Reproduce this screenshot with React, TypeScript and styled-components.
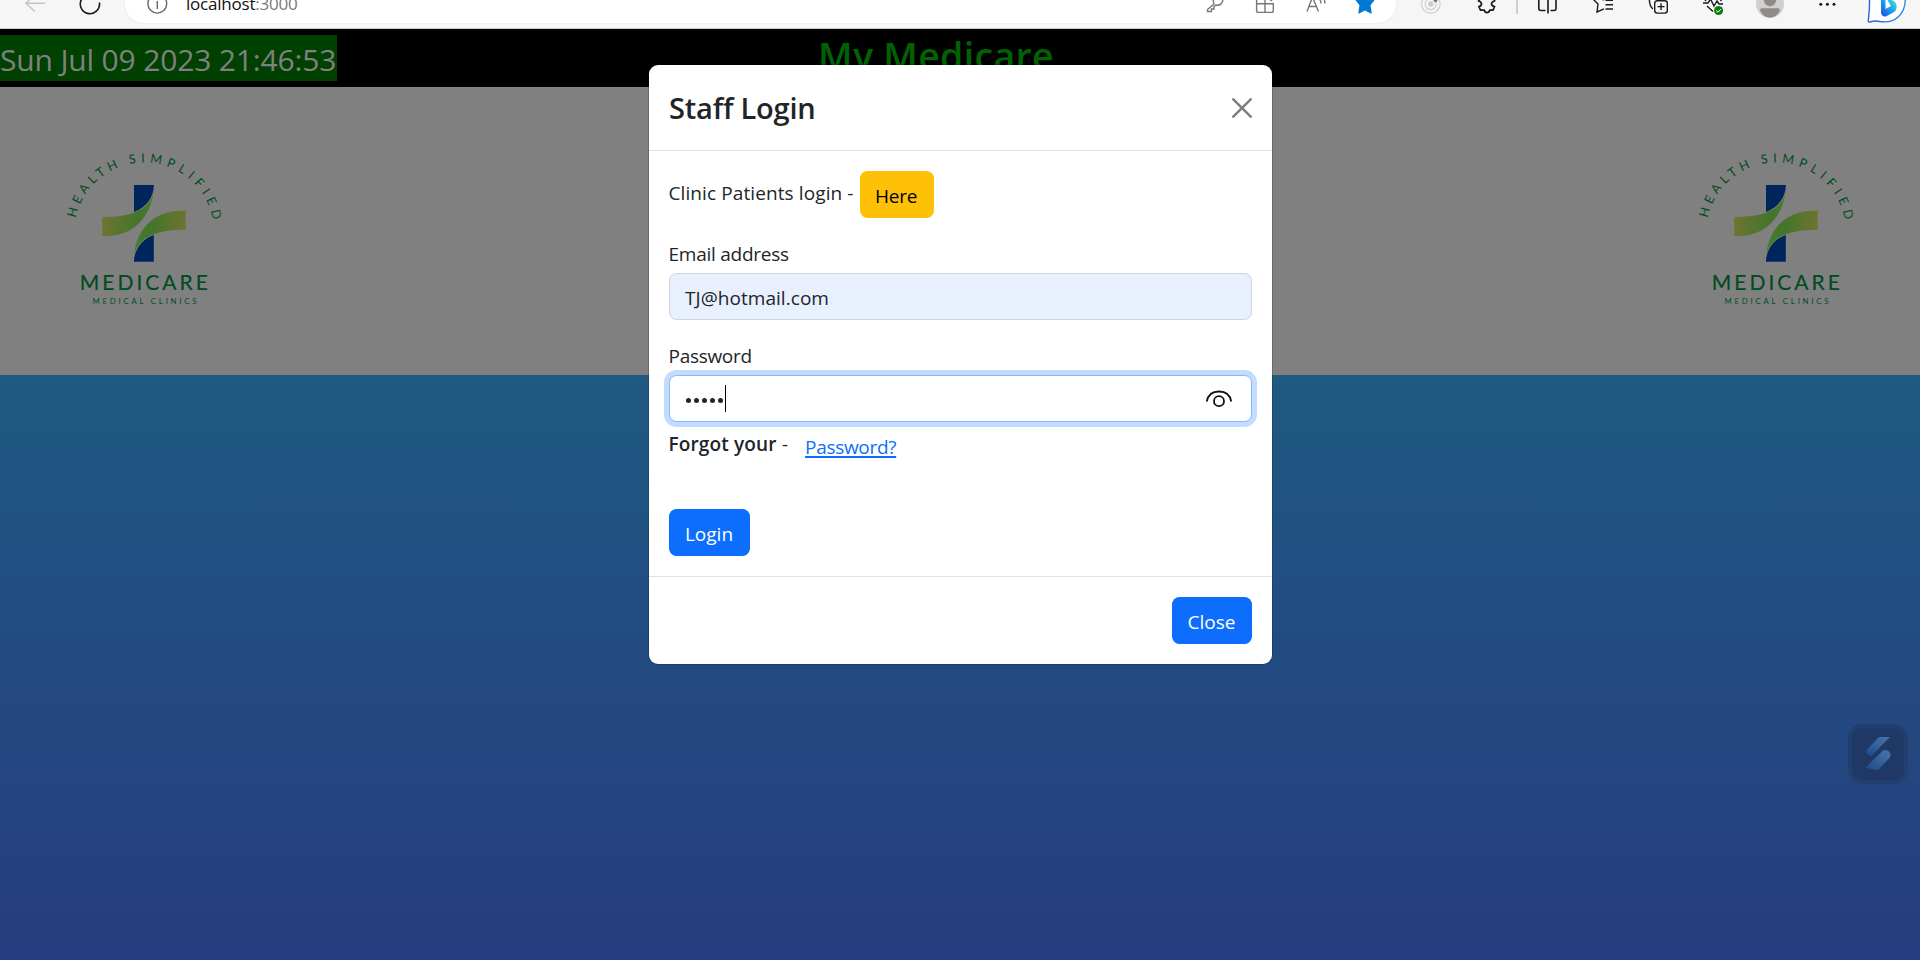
import React from "react";
import styled, { createGlobalStyle } from "styled-components";

const Global = createGlobalStyle`
  *, *::before, *::after { box-sizing: border-box; }
  html, body { margin: 0; padding: 0; }
  body { font-family: "Open Sans", "Noto Sans", sans-serif; color: #212529; overflow: hidden; }
`;

const Page = styled.div`
  position: relative;
  width: 1920px;
  height: 960px;
  display: flex;
  flex-direction: column;
  overflow: hidden;
`;

/* ---------- browser toolbar ---------- */
const Toolbar = styled.div`
  height: 29px;
  flex: none;
  display: flex;
  align-items: flex-start;
  background: #f6f6f6;
  border-bottom: 1px solid #c9cdc9;
  overflow: hidden;
`;
const Icon = styled.svg<{ $ml?: number; $w?: number; $tone?: string; $fill?: string; $sw?: number }>`
  display: block;
  flex: none;
  width: ${(p) => p.$w ?? 30}px;
  height: 28px;
  margin-left: ${(p) => p.$ml ?? 0}px;
  fill: ${(p) => p.$fill ?? "none"};
  stroke: ${(p) => p.$tone ?? "#1b1b1b"};
  stroke-width: ${(p) => p.$sw ?? 1.4};
`;
const AddressBar = styled.div`
  width: 1271px;
  height: 23px;
  flex: none;
  margin-left: 20px;
  padding-right: 16px;
  display: flex;
  background: #fff;
  border-radius: 0 0 19px 19px;
  box-shadow: 0 0 2px rgba(0, 0, 0, 0.1);
`;
const Url = styled.span`
  flex: 1;
  margin-left: 14px;
  font-size: 17px;
  line-height: 24px;
  height: 24px;
  margin-top: -8px;
  letter-spacing: -0.22px;
  color: #111;
  span { color: #777; }
`;
const Divider = styled.span`
  width: 2px;
  height: 14px;
  margin: 0 14px 0 15px;
  background: #cfcfcf;
`;

/* ---------- page ---------- */
const TopBar = styled.header`
  height: 58px;
  flex: none;
  display: grid;
  grid-template-columns: 1fr auto 1fr;
  background: #000;
`;
const Clock = styled.div`
  justify-self: start;
  width: 337px;
  height: 46px;
  margin-top: 6px;
  background: #004000;
  color: #808080;
  font-size: 30px;
  line-height: 49px;
  letter-spacing: -0.16px;
  white-space: nowrap;
`;
const SiteTitle = styled.h1`
  margin: 2px 48px 0 0;
  font-size: 37.5px;
  font-weight: 600;
  line-height: 49px;
  letter-spacing: 0.3px;
  color: #006200;
  white-space: nowrap;
`;
const Banner = styled.section`
  height: 288px;
  flex: none;
  display: flex;
  justify-content: space-between;
  padding: 43px 38px 0 40px;
  background: #808080;
`;
const LogoSvg = styled.svg`
  width: 210px;
  height: 190px;
  fill: #004c22;
  font-family: Lato, sans-serif;
`;
const Main = styled.main`
  flex: 1;
  display: flex;
  justify-content: flex-end;
  align-items: flex-start;
  padding: 349px 12px 0 0;
  background: linear-gradient(#1f5a80, #205382 22%, #273c7e);
`;
const Widget = styled.div`
  width: 60px;
  height: 60px;
  padding: 4px;
  border-radius: 14px;
  background: #21406f;
  svg { display: block; border-radius: 10px; background: #1f3866; }
`;

/* ---------- dialog ---------- */
const Dialog = styled.div`
  position: absolute;
  left: 649px;
  top: 65px;
  width: 623px;
  height: 599px;
  background: #fff;
  border-radius: 9px;
  box-shadow: 0 0 0 1px rgba(0, 0, 0, 0.18);
  font-size: 19px;
  white-space: nowrap;
`;
const DialogHeader = styled.div`
  height: 86px;
  padding: 0 20px 0 20px;
  display: flex;
  justify-content: space-between;
  align-items: center;
  border-bottom: 1px solid #dee2e6;
`;
const DialogTitle = styled.h2`
  margin: 0;
  font-size: 29px;
  font-weight: 600;
  line-height: 40px;
  letter-spacing: -0.2px;
`;
const DialogBody = styled.div`
  height: 425px;
  padding: 20px;
`;
const DialogFooter = styled.div`
  height: 88px;
  padding: 20px;
  display: flex;
  justify-content: flex-end;
  border-top: 1px solid #dee2e6;
`;
const Row = styled.div<{ $h: number; $gap?: number }>`
  display: flex;
  align-items: flex-start;
  height: ${(p) => p.$h}px;
  margin-left: -0.5px;
  gap: ${(p) => p.$gap ?? 0}px;
`;
const Button = styled.button<{ $warn?: boolean; $w: number; $ls?: number }>`
  width: ${(p) => p.$w}px;
  height: 47px;
  padding: 3px 1px 0 0;
  border: 0;
  border-radius: 7.5px;
  background: ${(p) => (p.$warn ? "#ffc107" : "#0d6efd")};
  color: ${(p) => (p.$warn ? "#000" : "#fff")};
  font: 400 19px/40px "Open Sans", sans-serif;
  letter-spacing: ${(p) => p.$ls ?? 0}px;
`;
const Text = styled.span<{ $ls?: number; $lh?: number; $bold?: boolean }>`
  line-height: ${(p) => p.$lh ?? 30}px;
  letter-spacing: ${(p) => p.$ls ?? 0}px;
  font-weight: ${(p) => (p.$bold ? 600 : 400)};
`;
const Field = styled.div<{ $focus?: boolean; $ls?: number }>`
  height: 47px;
  display: flex;
  align-items: center;
  padding: 2px 16px 0 15px;
  border: 1px solid ${(p) => (p.$focus ? "#86b7fe" : "#ced4da")};
  border-radius: 7.5px;
  background: ${(p) => (p.$focus ? "#fff" : "#e8f0fe")};
  box-shadow: ${(p) => (p.$focus ? "0 0 0 5px #c2dbfe" : "none")};
  letter-spacing: ${(p) => p.$ls ?? 0}px;
`;
const Dots = styled.span`
  display: flex;
  gap: 3px;
  padding: 2px 0 0 1px;
  i { width: 5px; height: 5px; border-radius: 50%; background: #212529; }
`;
const Caret = styled.span`
  width: 1px;
  height: 27px;
  margin: 0 auto 3px 2px;
  background: #000;
`;
const Link = styled.a`
  margin-top: 10px;
  color: #0d6efd;
  line-height: 30px;
  letter-spacing: -0.3px;
  text-decoration: underline;
  text-decoration-thickness: 1.5px;
  text-underline-offset: 2px;
`;

const Logo = ({ id }: { id: string }) => (
  <LogoSvg viewBox="0 0 210 190">
    <defs>
      <linearGradient id={id + "a"}><stop offset="0" stopColor="#6c7531" /><stop offset=".75" stopColor="#41752b" /><stop offset="1" stopColor="#45802b" /></linearGradient>
      <linearGradient id={id + "b"}><stop offset="0" stopColor="#45802b" /><stop offset=".3" stopColor="#41752b" /><stop offset="1" stopColor="#6c7531" /></linearGradient>
      <path id={id + "arc"} d="M35.6 88A70 70 0 0 1 173.9 97.7" />
    </defs>
    <text fontSize="12.6"><textPath href={"#" + id + "arc"} textLength="69">HEALTH</textPath></text>
    <text fontSize="12.6"><textPath href={"#" + id + "arc"} startOffset="80.5" textLength="112">SIMPLIFIED</textPath></text>
    <path fill="#00245c" d="M94 55h19.8v2C113 67 107 77 94 82zM113.8 131.7H94V129C96 118 102 109 113.8 105z" />
    <path fill={`url(#${id}a)`} d="M62.3 87C88 87 111 82 113.5 60C112 84 95 108 62.3 106z" />
    <path fill={`url(#${id}b)`} d="M145.7 99.8C118 100 97 106 94.2 127C95 101 113 79 145.7 80.8z" />
    <text x="39.8" y="160" fontSize="21" stroke="#004c22" strokeWidth=".2" textLength="128">MEDICARE</text>
    <text x="52.5" y="173.7" fontSize="7.8" textLength="104">MEDICAL CLINICS</text>
  </LogoSvg>
);

export default function App() {
  return (
    <Page>
      <Global />
      <Toolbar>
        <Icon $ml={20} viewBox="20 0 30 28" $tone="#c4c4c4"><path d="M45 3.2H26.5M35 -6L26 3.2L35 11.8" /></Icon>
        <Icon $ml={25} viewBox="75 0 30 28" $sw={1.6}><path d="M99.4 2.5A9.6 9.6 0 1 1 82.5 -2" /></Icon>
        <AddressBar>
          <Icon $ml={17} viewBox="142 0 30 28" $tone="#666"><circle cx="157.3" cy="3.7" r="9.4" /><path d="M157.3 1v8" /></Icon>
          <Url>localhost<span>:3000</span></Url>
          <Icon viewBox="1200 0 30 28" $tone="#777"><path d="M1214 -3C1213 0 1213 2 1214 4L1207.5 9.5V11.5H1211.5V9H1214V6.5L1216 5C1220 6 1223 3 1223 -1" /></Icon>
          <Icon $ml={20} viewBox="1250 0 30 28" $tone="#777"><path d="M1256.6 -2V10.5Q1256.6 12.4 1258.5 12.4H1271.5Q1273.3 12.4 1273.3 10.5V3.7H1256.6M1265 -2V12.4M1268 -2L1272 1" /></Icon>
          <Icon $ml={21} viewBox="1301 0 30 28" $tone="#777"><path d="M1307 11.5L1312.5 -3L1318.5 11.5M1309 6.5H1316.5M1319.5 -1Q1321 1 1321 3.5M1323 -2Q1325 0 1325 3.5" /></Icon>
          <Icon $ml={19} viewBox="1350 0 30 28" $tone="#0078d4" $fill="#0078d4"><path strokeLinejoin="round" d="M1355.5 -1H1374.5L1369.8 5L1371 12.8L1365 9.7L1359 12.8L1360.2 5Z" /></Icon>
        </AddressBar>
        <Icon $ml={20} viewBox="1416 0 30 28" $tone="#d3d3d3"><circle cx="1430.8" cy="4" r="9.3" /><circle cx="1430.8" cy="4" r="5.6" /><circle cx="1430.8" cy="4" r="2.2" fill="#c8c8c8" /><circle cx="1435.5" cy="0.3" r="2" fill="#777" stroke="none" /></Icon>
        <Icon $ml={25} viewBox="1471 0 30 28" $sw={1.7}><path strokeLinejoin="round" d="M1480.5 -2L1478.5 1Q1481.5 1.7 1481.5 4Q1481.5 6 1478.8 6.5L1480.5 10.2H1484.3Q1484.8 12.7 1487 12.7Q1489.2 12.7 1489.7 10.2H1493L1494.6 6.5Q1491.5 6 1491.5 4Q1491.5 1.7 1494.6 1V-2" /></Icon>
        <Divider />
        <Icon viewBox="1532 0 30 28" $sw={1.6}><path d="M1538.8 -2V8.5Q1538.8 10.5 1541 10.5H1545.5M1548 -2V13.5M1550.5 10.5H1554Q1556 10.5 1556 8.5V-2" /></Icon>
        <Icon $ml={26} viewBox="1588 0 30 28"><path d="M1593 -1L1598 4L1597 12L1604 8.8M1603 -1L1603.5 .5M1605.5 .3H1613M1605.5 4.7H1613M1605.5 9H1613" /></Icon>
        <Icon $ml={25} viewBox="1643 0 30 28"><rect x="1654.7" y=".7" width="12.6" height="12.4" rx="2.5" /><path d="M1661 3.2V10M1657.5 6.6H1664.5M1649.3 -1Q1649.5 7 1653 8.8" /></Icon>
        <Icon $ml={25} viewBox="1698 0 30 28"><path d="M1703 3H1708L1710.5 -1L1714 6L1717 1L1719 4H1723M1704.5 -1L1706 1M1707 6L1713 11.5M1720.5 1L1722 -1" /><circle cx="1718.6" cy="10.5" r="4.5" fill="#107c10" stroke="none" /><path stroke="#fff" d="M1716.3 10.5L1718 12.2L1721 9" strokeWidth="1" /></Icon>
        <Icon $ml={27} viewBox="1755 0 30 28" $tone="none"><circle cx="1770" cy="4" r="14" fill="#d2d0ce" /><circle cx="1770" cy="0" r="6.2" fill="#8f8b88" /><path fill="#8f8b88" d="M1762 8.2H1778Q1780 8.2 1780 10.5C1778 15 1774 17.5 1770 17.5S1762 15 1760 10.5Q1760 8.2 1762 8.2" /></Icon>
        <Icon $ml={27} viewBox="1812 0 30 28" $tone="none" $fill="#1b1b1b"><circle cx="1820.8" cy="4.2" r="1.5" /><circle cx="1827.4" cy="4.2" r="1.5" /><circle cx="1834" cy="4.2" r="1.5" /></Icon>
        <Icon $ml={24} $w={42} viewBox="1866 0 42 28">
          <defs>
            <linearGradient id="bb" x1="0" y1="0" x2="1" y2="0"><stop stopColor="#2b5fd9" /><stop offset="1" stopColor="#2f8be6" /></linearGradient>
            <linearGradient id="bg" x1="0" y1="1" x2="1" y2="0"><stop stopColor="#1a4fd8" /><stop offset=".5" stopColor="#1aa0f0" /><stop offset="1" stopColor="#4ff0c8" /></linearGradient>
          </defs>
          <path fill="#fff" stroke="url(#bb)" d="M1869.5 -3V4C1869.5 12 1868.5 17 1868.3 21Q1868.5 22.5 1870 22C1873 21 1875 20.5 1880 21.5C1895 24 1905 14 1905.3 0V-3" />
          <path fill="url(#bg)" stroke="none" d="M1881 -2H1885.5V9L1891 6L1888 1L1886.5 -2L1892 0C1897 2 1898 8 1895 11.5L1886 16.5C1883.5 17 1881 15.5 1881 12.5Z" />
        </Icon>
      </Toolbar>

      <TopBar>
        <Clock>Sun Jul 09 2023 21:46:53</Clock>
        <SiteTitle>My Medicare</SiteTitle>
      </TopBar>
      <Banner>
        <Logo id="left" />
        <Logo id="right" />
      </Banner>
      <Main>
        <Widget>
          <svg width="52" height="52" viewBox="0 0 52 52">
            <defs><linearGradient id="s" x1="0" y1="1" x2=".7" y2="0"><stop stopColor="#1f4a8c" /><stop offset="1" stopColor="#4370a8" /></linearGradient></defs>
            <path fill="url(#s)" d="M27 9H38L20 27.5C16 29 13.5 24 15 21.5Z" />
            <path fill="url(#s)" d="M31 22.5C36.5 21 40 25 38 29.5L26 42Q20 42 13.5 39.5Z" />
          </svg>
        </Widget>
      </Main>

      <Dialog role="dialog">
        <DialogHeader>
          <DialogTitle>Staff Login</DialogTitle>
          <svg width="20" height="20" viewBox="0 0 20 20" stroke="#7f7f7f" strokeWidth="2.5" strokeLinecap="round"><path d="M1.3 1.3L18.7 18.7M18.7 1.3L1.3 18.7" /></svg>
        </DialogHeader>
        <DialogBody>
          <Row $h={68} $gap={6}>
            <Text $lh={45} $ls={0.1}>Clinic Patients login -</Text>
            <Button $warn $w={74} $ls={-0.2}>Here</Button>
          </Row>
          <Row $h={34}><Text $ls={-0.25}>Email address</Text></Row>
          <Field $ls={0.05}>TJ@hotmail.com</Field>
          <Row $h={21} />
          <Row $h={34}><Text $ls={-0.3}>Password</Text></Row>
          <Field $focus>
            <Dots><i /><i /><i /><i /><i /></Dots>
            <Caret />
            <svg width="32" height="24" viewBox="0 0 32 24" fill="none" stroke="#111" strokeWidth="1.8"><path d="M3.8 13.5C5 6.5 10 3.5 16 3.5S27 6.5 28.2 13.5" /><circle cx="16" cy="13.2" r="5" /></svg>
          </Field>
          <Row $h={87} $gap={16.5}>
            <Text $lh={45} $ls={0.4}><Text $bold $lh={45} $ls={0.15}>Forgot your</Text> -</Text>
            <Link>Password?</Link>
          </Row>
          <Button $w={81}>Login</Button>
        </DialogBody>
        <DialogFooter><Button $w={80}>Close</Button></DialogFooter>
      </Dialog>
    </Page>
  );
}
